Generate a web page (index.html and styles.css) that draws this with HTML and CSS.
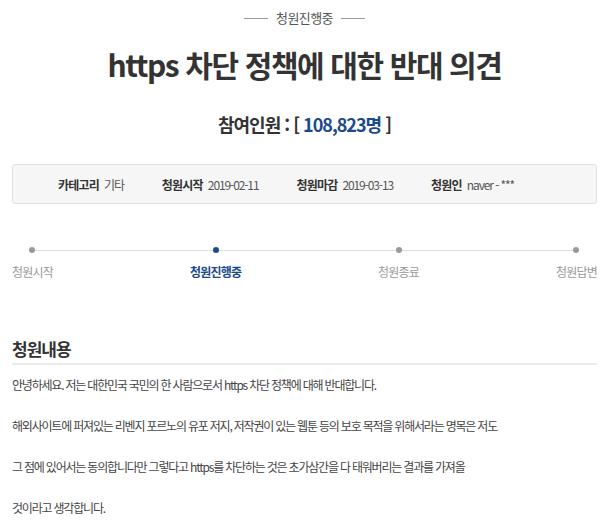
FILE: index.html
```html
<!DOCTYPE html>
<html lang="ko">
<head>
<meta charset="utf-8">
<link rel="stylesheet" href="styles.css">
</head>
<body>
<div class="page">
  <div class="status"><span class="dash"></span><span class="status-text">청원진행중</span><span class="dash"></span></div>
  <h1 class="title">https 차단 정책에 대한 반대 의견</h1>
  <div class="count">참여인원 : [ <span class="num">108,823명</span> ]</div>
  <div class="info">
    <div class="info-item"><b>카테고리</b><span>기타</span></div>
    <div class="info-item"><b>청원시작</b><span>2019-02-11</span></div>
    <div class="info-item"><b>청원마감</b><span>2019-03-13</span></div>
    <div class="info-item"><b>청원인</b><span>naver - ***</span></div>
  </div>
  <div class="progress">
    <div class="track"></div>
    <div class="step"><span class="dot"></span><span class="label">청원시작</span></div>
    <div class="step active"><span class="dot"></span><span class="label">청원진행중</span></div>
    <div class="step"><span class="dot"></span><span class="label">청원종료</span></div>
    <div class="step"><span class="dot"></span><span class="label">청원답변</span></div>
  </div>
  <h2 class="section">청원내용</h2>
  <div class="content">
    <p>안녕하세요. 저는 대한민국 국민의 한 사람으로서 https 차단 정책에 대해 반대합니다.</p>
    <p>해외사이트에 퍼져있는 리벤지 포르노의 유포 저지, 저작권이 있는 웹툰 등의 보호 목적을 위해서라는 명목은 저도</p>
    <p>그 점에 있어서는 동의합니다만 그렇다고 https를 차단하는 것은 초가삼간을 다 태워버리는 결과를 가져올</p>
    <p>것이라고 생각합니다.</p>
  </div>
</div>
</body>
</html>
```
FILE: styles.css
```css
html, body { margin: 0; padding: 0; background: #fff; }
body { font-family: "Noto Sans CJK KR", "Noto Sans", sans-serif; color: #333; }
.page { padding: 0 3px 0 12px; }
.status { display: flex; justify-content: center; align-items: center; gap: 8px; padding-top: 8px; height: 20px; }
.dash { width: 24px; height: 1px; background: #999; }
.status-text { font-size: 13px; color: #555; letter-spacing: -0.6px; line-height: 20px; }
.title { margin: 16px 0 0; text-align: center; font-size: 30px; font-weight: bold; color: #333; letter-spacing: -1.4px; line-height: 40px; }
.count { margin-top: 28px; text-align: center; font-size: 18px; font-weight: bold; color: #333; letter-spacing: -1px; line-height: 24px; }
.num { color: #1b4a8a; }
.info { margin-top: 28px; height: 38px; background: #f6f6f6; border: 1px solid #e0e0e0; border-radius: 3px; display: flex; align-items: center; padding-left: 45px; gap: 38px; font-size: 12px; letter-spacing: -0.8px; }
.info-item b { font-weight: bold; color: #333; margin-right: 5px; }
.info-item span { color: #555; letter-spacing: -1.1px; }
.progress { position: relative; margin-top: 36px; display: flex; justify-content: space-between; }
.track { position: absolute; left: 19px; right: 20px; top: 10px; height: 1px; background: #dcdcdc; }
.step { display: flex; flex-direction: column; align-items: center; position: relative; }
.dot { width: 6px; height: 6px; border-radius: 50%; background: #9a9a9a; margin-top: 7px; }
.label { margin-top: 10px; font-size: 12px; color: #999; letter-spacing: -0.8px; line-height: 18px; }
.step.active .dot { background: #1b4a8a; }
.step.active .label { color: #1b4a8a; font-weight: bold; }
.section { margin: 56px 0 0; font-size: 17px; font-weight: bold; color: #333; letter-spacing: -1px; line-height: 24px; padding-bottom: 2px; border-bottom: 2px solid #ececec; }
.content { margin-top: 10px; font-size: 12px; color: #444; letter-spacing: -1.2px; }
.content p { margin: 0 0 21px; line-height: 20px; }
```
